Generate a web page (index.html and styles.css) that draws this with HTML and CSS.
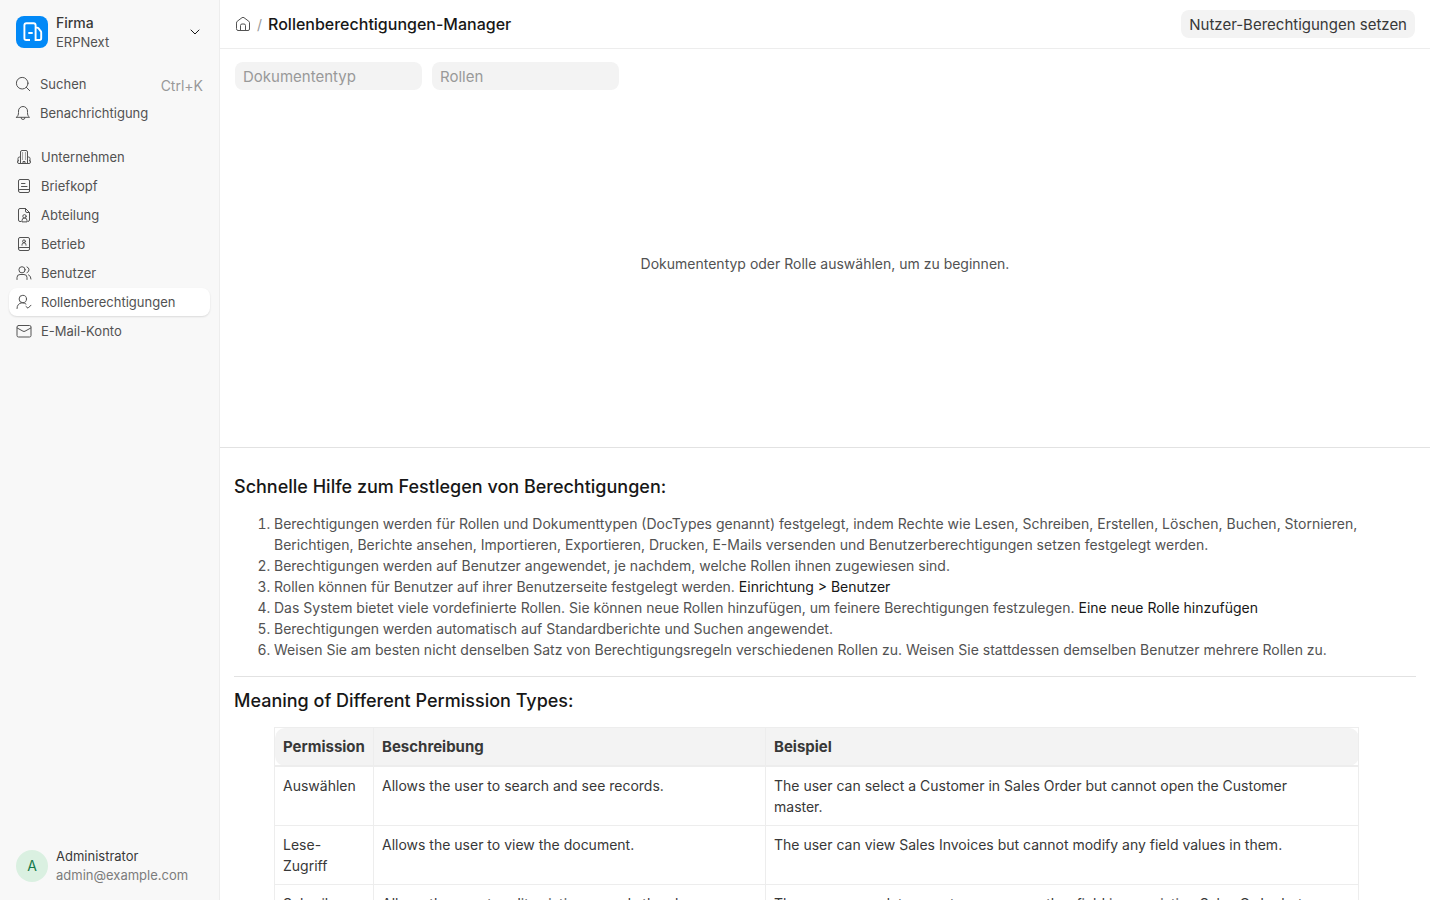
FILE: index.html
```html
<!DOCTYPE html>
<html lang="de">

<head>
    <meta charset="UTF-8">
    <meta name="viewport" content="width=device-width, initial-scale=1.0">
    <title>Rollenberechtigungen-Manager</title>
    <link rel="stylesheet" href="styles.css">
</head>

<body>

    <aside class="sidebar">
        <button class="workspace" type="button">
            <svg class="logo" viewBox="0 0 32 32">
                <rect width="32" height="32" rx="8" fill="#0289f7" />
                <path d="M14 24H10.300Q8.400 24 8.400 22.200V9.300Q8.400 7.300 10.400 7.300H17.600Q19.600 7.300 19.600 9.300V24H23.300Q25.200 24 25.200 22.200V16.500Q25.200 15.600 24.600 15L22.600 12.400Q22 11.600 21 11.600H19.600M12.300 17H16.700" fill="none" stroke="#fff" stroke-width="1.900" />
            </svg>
            <span class="names">
                <span class="company">Firma</span>
                <span class="app">ERPNext</span>
            </span>
            <svg class="icon chevron" viewBox="0 0 16 16"><path d="M4 6 8 10 12 6" /></svg>
        </button>

        <nav class="menu top-menu">
            <a href="#">
                <svg class="icon" viewBox="0 0 16 16"><circle cx="7.200" cy="7.200" r="5.800" /><path d="m11.300 11.300 3.400 3.400" /></svg>
                <span>Suchen</span>
                <kbd>Ctrl+K</kbd>
            </a>
            <a href="#">
                <svg class="icon" viewBox="0 0 16 16"><path d="M1.500 12.300H14.500C13 11.200 12.500 9.700 12.500 7.500V6A4.500 4.500 0 0 0 3.500 6V7.500C3.500 9.700 3 11.200 1.500 12.300ZM6 12.500a2 2 0 0 0 4 0" /></svg>
                <span>Benachrichtigung</span>
            </a>
        </nav>

        <nav class="menu main-menu">
            <a href="#">
                <svg class="icon" viewBox="0 0 16 16"><path d="M4.500 14.500V3Q4.500 1.500 6 1.500H10Q11.500 1.500 11.500 3V14.500M4.500 8H3.500Q2 8 2 9.500V12M11.500 8H12.500Q14 8 14 9.500V12M2.500 11.500Q1.500 11.500 1.500 13Q1.500 14.500 3 14.500H13Q14.500 14.500 14.500 13Q14.500 11.500 13.500 11.500M7 14.500V12.500H9V14.500" /><path d="M6.300 4H6.700M9.300 4H9.700M6.300 6H6.700M9.300 6H9.700M6.300 8H6.700M9.300 8H9.700M6.300 10H6.700M9.300 10H9.700" /></svg>
                <span>Unternehmen</span>
            </a>
            <a href="#">
                <svg class="icon" viewBox="0 0 16 16"><path d="M2.500 12.500V3Q2.500 1.500 4 1.500H12Q13.500 1.500 13.500 3V13Q13.500 14.500 12 14.500H4Q2.500 14.500 2.500 12.700Q2.500 11.500 4 11.500H13.500M5.500 5.500H9M5.500 8.500H11" /></svg>
                <span>Briefkopf</span>
            </a>
            <a href="#">
                <svg class="icon" viewBox="0 0 16 16"><path d="M5 14.500H4Q2.500 14.500 2.500 13V3Q2.500 1.500 4 1.500H9.500L13.500 5.500V13Q13.500 14.500 12 14.500M9.500 1.500V4Q9.500 5.500 11 5.500H13.500M6 14.500V13.500A2.500 2.500 0 0 1 11 13.500V14.500Z" /><circle cx="8.500" cy="9.300" r="1.700" /></svg>
                <span>Abteilung</span>
            </a>
            <a href="#">
                <svg class="icon" viewBox="0 0 16 16"><path d="M2.500 12.500V3Q2.500 1.500 4 1.500H12Q13.500 1.500 13.500 3V13Q13.500 14.500 12 14.500H4Q2.500 14.500 2.500 12.700Q2.500 11.500 4 11.500H13.500M6 9.200V8.800A2 2 0 0 1 10 8.800V9.200" /><circle cx="8" cy="5.300" r="1.400" /></svg>
                <span>Betrieb</span>
            </a>
            <a href="#">
                <svg class="icon" viewBox="0 0 16 16"><circle cx="6" cy="4.800" r="3.100" /><path d="M1 14.500V12.500Q1 9.500 4 9.500H8Q11 9.500 11 12.500V14.500M11 1.900A3.100 3.100 0 0 1 11 7.700M12.500 9.800Q15 10.800 15 14" /></svg>
                <span>Benutzer</span>
            </a>
            <a href="#" class="active">
                <svg class="icon" viewBox="0 0 16 16"><circle cx="6.800" cy="5" r="3.700" /><path d="M1 14.500Q1 9.500 6 8.800Q8.500 8.800 10 10M10 12.500 12 14.200 15 11.200" /></svg>
                <span>Rollenberechtigungen</span>
            </a>
            <a href="#">
                <svg class="icon" viewBox="0 0 16 16"><rect x="1" y="2.500" width="14" height="11.500" rx="1.500" /><path d="M1.200 5 7 8.200Q8 8.700 9 8.200L14.800 5" /></svg>
                <span>E-Mail-Konto</span>
            </a>
        </nav>

        <button class="user" type="button">
            <span class="avatar">A</span>
            <span class="names">
                <span class="user-name">Administrator</span>
                <span class="email">admin@example.com</span>
            </span>
        </button>
    </aside>

    <main class="content">
        <header class="page-head">
            <a href="#" class="home" aria-label="Home">
                <svg class="icon" viewBox="0 0 16 16"><path d="M1.500 6.700Q1.500 5.800 2.200 5.300L7 1.700Q8 1 9 1.700L13.800 5.300Q14.500 5.800 14.500 6.700V13Q14.500 14.500 13 14.500H3Q1.500 14.500 1.500 13ZM5.500 14.500V9.500Q5.500 8 7 8H9Q10.500 8 10.500 9.500V14.500" /></svg>
            </a>
            <span class="slash">/</span>
            <h1>Rollenberechtigungen-Manager</h1>
            <button class="set-permissions" type="button">Nutzer-Berechtigungen setzen</button>
        </header>

        <form class="filters">
            <input type="text" placeholder="Dokumententyp" aria-label="Dokumententyp">
            <input type="text" placeholder="Rollen" aria-label="Rollen">
        </form>

        <p class="empty">Dokumententyp oder Rolle auswählen, um zu beginnen.</p>

        <section class="help">
            <h2>Schnelle Hilfe zum Festlegen von Berechtigungen:</h2>
            <ol>
                <li>Berechtigungen werden für Rollen und Dokumenttypen (DocTypes genannt) festgelegt, indem Rechte wie Lesen, Schreiben, Erstellen, Löschen, Buchen, Stornieren, Berichtigen, Berichte ansehen, Importieren, Exportieren, Drucken, E-Mails versenden und Benutzerberechtigungen setzen festgelegt werden.</li>
                <li>Berechtigungen werden auf Benutzer angewendet, je nachdem, welche Rollen ihnen zugewiesen sind.</li>
                <li>Rollen können für Benutzer auf ihrer Benutzerseite festgelegt werden. <a href="#">Einrichtung &gt; Benutzer</a></li>
                <li>Das System bietet viele vordefinierte Rollen. Sie können neue Rollen hinzufügen, um feinere Berechtigungen festzulegen. <a href="#">Eine neue Rolle hinzufügen</a></li>
                <li>Berechtigungen werden automatisch auf Standardberichte und Suchen angewendet.</li>
                <li>Weisen Sie am besten nicht denselben Satz von Berechtigungsregeln verschiedenen Rollen zu. Weisen Sie stattdessen demselben Benutzer mehrere Rollen zu.</li>
            </ol>
            <hr>
            <h2>Meaning of Different Permission Types:</h2>
            <table>
                <thead>
                    <tr>
                        <th class="col-permission">Permission</th>
                        <th class="col-description">Beschreibung</th>
                        <th>Beispiel</th>
                    </tr>
                </thead>
                <tbody>
                    <tr>
                        <td>Auswählen</td>
                        <td>Allows the user to search and see records.</td>
                        <td>The user can select a Customer in Sales Order but cannot open the Customer master.</td>
                    </tr>
                    <tr>
                        <td>Lese-Zugriff</td>
                        <td>Allows the user to view the document.</td>
                        <td>The user can view Sales Invoices but cannot modify any field values in them.</td>
                    </tr>
                    <tr>
                        <td>Schreib-Zugriff</td>
                        <td>Allows the user to edit existing records they have access to.</td>
                        <td>The user can update a customer or any other field in an existing Sales Order but cannot create a new Sales Order.</td>
                    </tr>
                </tbody>
            </table>
        </section>
    </main>

</body>

</html>
```

FILE: styles.css
```css
* {
    box-sizing: border-box;
}

body {
    margin: 0;
    height: 100vh;
    display: flex;
    overflow: hidden;
    font-family: Inter, sans-serif;
    font-size: 14px;
    line-height: 21px;
    color: #383838;
    background-color: #fff;
}

a {
    color: #171717;
    text-decoration: none;
}

button,
input {
    font: inherit;
    border: none;
}

button {
    cursor: pointer;
}

.icon {
    width: 16px;
    height: 16px;
    flex: none;
    fill: none;
    stroke: #525252;
    stroke-linecap: round;
    stroke-linejoin: round;
}

/* Sidebar */
.sidebar {
    width: 220px;
    flex: none;
    display: flex;
    flex-direction: column;
    padding: 11px 9px 12px;
    background-color: #f8f8f8;
    border-right: 1px solid #ededed;
}

.workspace,
.user {
    display: flex;
    align-items: center;
    gap: 8px;
    padding: 0 7px;
    background: none;
    text-align: left;
}

.workspace {
    height: 42px;
}

.logo {
    width: 32px;
    height: 32px;
}

.chevron {
    stroke: #171717;
}

.names {
    flex: 1;
    display: flex;
    flex-direction: column;
    font-size: 13px;
    line-height: 19px;
}

.company {
    font-size: 14px;
    font-weight: 500;
    line-height: 21px;
    color: #383838;
}

.app {
    color: #525252;
}

.menu {
    display: flex;
    flex-direction: column;
    gap: 1px;
}

.menu a {
    display: flex;
    align-items: center;
    gap: 9px;
    height: 28px;
    padding: 0 7px;
    border-radius: 8px;
    font-size: 13px;
    color: #525252;
}

.menu .active {
    background-color: #fff;
    box-shadow: 0 1px 2px rgba(0, 0, 0, 0.12);
}

.top-menu {
    margin-top: 17px;
}

.top-menu a {
    gap: 8px;
    padding: 0 7px 0 6px;
}

.top-menu .icon {
    margin-right: 1px;
}

kbd {
    margin-left: auto;
    padding-top: 3px;
    font-family: inherit;
    font-size: 14px;
    color: #999;
}

.main-menu {
    margin-top: 16px;
}

.user {
    margin-top: auto;
    margin-bottom: 3px;
}

.avatar {
    width: 32px;
    height: 32px;
    border-radius: 50%;
    background-color: #daf0e1;
    color: #16794c;
    line-height: 32px;
    text-align: center;
}

.user-name {
    color: #383838;
}

.email {
    color: #7c7c7c;
}

/* Page */
.content {
    flex: 1;
    min-width: 0;
    margin-right: 10px;
    overflow: hidden;
}

.page-head {
    display: flex;
    align-items: center;
    height: 49px;
    padding: 0 15px;
    border-bottom: 1px solid #ededed;
}

.home {
    display: flex;
}

.slash {
    margin: 0 6px;
    color: #999;
}

h1 {
    margin: 0;
    font-size: 16px;
    font-weight: 500;
    color: #171717;
}

.set-permissions {
    height: 28px;
    margin-left: auto;
    padding: 0 8px;
    border-radius: 8px;
    background-color: #f3f3f3;
    color: #383838;
    font-size: 15px;
}

.filters {
    display: flex;
    gap: 10px;
    padding: 13px 15px;
}

.filters input {
    width: 187px;
    height: 28px;
    padding: 0 8px;
    border-radius: 8px;
    background-color: #f3f3f3;
    font-size: 15px;
}

.filters input::placeholder {
    color: #999;
}

.empty {
    margin: 0;
    padding: 150px 15px 173px;
    text-align: center;
    color: #525252;
}

.help {
    padding: 27px 14px;
    border-top: 1px solid #e2e2e2;
}

h2 {
    margin: 0 0 14px;
    font-size: 18px;
    font-weight: 500;
    line-height: 24px;
    color: #171717;
}

ol {
    margin: 0;
    padding-left: 40px;
    color: #525252;
}

hr {
    margin: 16px 0 12px;
    border: none;
    border-top: 1px solid #e2e2e2;
}

table {
    width: calc(100% - 97px);
    margin-left: 40px;
    border-collapse: collapse;
}

th,
td {
    padding: 8px;
    border: 1px solid #ededed;
    text-align: left;
    vertical-align: top;
}

th {
    border-bottom-width: 2px;
    background-color: #f3f3f3;
    font-size: 15px;
    font-weight: 700;
}

th:first-child {
    border-radius: 10px 0 0 10px;
}

th:last-child {
    border-radius: 0 10px 10px 0;
}

td:last-child {
    padding-right: 24px;
}

.col-permission {
    width: 99px;
}

.col-description {
    width: 392px;
}
```
